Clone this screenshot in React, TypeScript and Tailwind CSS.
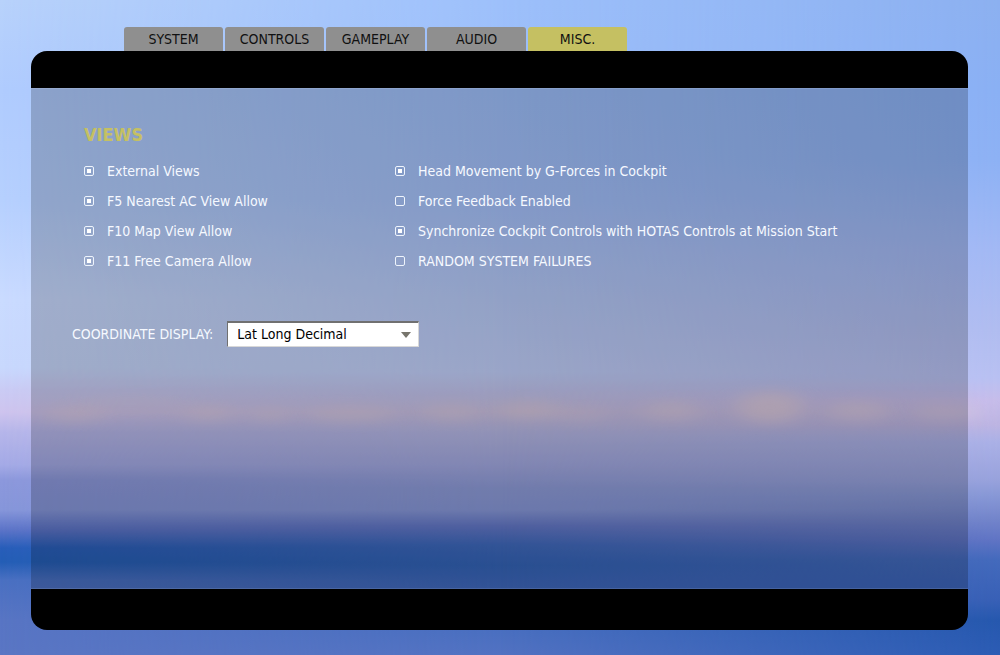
import { useState } from "react"
import clsx from "clsx"

type Stop = [number, string]

interface Option {
  id: string
  label: string
  checked: boolean
}

const tabs = ["SYSTEM", "CONTROLS", "GAMEPLAY", "AUDIO", "MISC."]

const viewOptions: Option[] = [
  { id: "external", label: "External Views", checked: true },
  { id: "f5", label: "F5 Nearest AC View Allow", checked: true },
  { id: "f10", label: "F10 Map View Allow", checked: true },
  { id: "f11", label: "F11 Free Camera Allow", checked: true },
]

const simOptions: Option[] = [
  { id: "head", label: "Head Movement by G-Forces in Cockpit", checked: true },
  { id: "ffb", label: "Force Feedback Enabled", checked: false },
  {
    id: "hotas",
    label: "Synchronize Cockpit Controls with HOTAS Controls at Mission Start",
    checked: true,
  },
  { id: "failures", label: "RANDOM SYSTEM FAILURES", checked: false },
]

// Sky colours from top to bottom, y in viewBox units
const leftSky: Stop[] = [
  [0, "#b8d2fb"], [90, "#b0ccfe"], [200, "#b6d0fe"], [300, "#cadbff"],
  [368, "#c8d8fd"], [390, "#cacbf4"], [412, "#cec4ee"], [432, "#b6b6ea"],
  [465, "#a4aae6"], [480, "#8c98dc"], [510, "#8696da"], [530, "#5c74c8"],
  [548, "#285eba"], [562, "#245eb6"], [580, "#4a70c2"], [620, "#5875c4"],
  [655, "#5a76c4"],
]
const midSky: Stop[] = [
  [0, "#9dc0fb"], [90, "#9dbef9"], [200, "#a4c0fa"], [300, "#b7caf8"],
  [372, "#c1cffa"], [392, "#c2c4ee"], [412, "#c8bfe2"], [434, "#b4b6e4"],
  [465, "#a2a8e0"], [488, "#8e9bd8"], [510, "#8898d8"], [526, "#6478c8"],
  [545, "#3f69bc"], [565, "#3463b6"], [590, "#4068bc"], [632, "#4a6fc0"],
  [655, "#5272c2"],
]
const rightSky: Stop[] = [
  [0, "#8cb0f0"], [90, "#8ab0f4"], [160, "#8db1f4"], [250, "#a2b8f4"],
  [330, "#b0bcf0"], [378, "#b8c0f2"], [400, "#c6bcea"], [425, "#bcb4e2"],
  [442, "#aab0e6"], [480, "#98a2dc"], [495, "#8898d6"], [520, "#7284ca"],
  [540, "#6074c4"], [560, "#446abc"], [600, "#3860b6"], [620, "#2658ae"],
  [655, "#2c5cb4"],
]

// x, y, rx, ry, opacity
const clouds = [
  [75, 414, 30, 8, 0.4],
  [130, 404, 60, 10, 0.15],
  [208, 413, 26, 8, 0.4],
  [270, 415, 20, 7, 0.35],
  [350, 414, 44, 8, 0.35],
  [452, 412, 28, 9, 0.35],
  [528, 410, 32, 9, 0.45],
  [580, 414, 26, 8, 0.25],
  [672, 411, 30, 10, 0.4],
  [770, 407, 34, 16, 0.6],
  [858, 411, 34, 10, 0.45],
  [945, 412, 36, 9, 0.35],
]

const SkyGradient = ({ id, stops }: { id: string; stops: Stop[] }) => (
  <linearGradient id={id} x1="0" y1="0" x2="0" y2="655" gradientUnits="userSpaceOnUse">
    {stops.map(([y, color]) => (
      <stop key={y} offset={y / 655} stopColor={color} />
    ))}
  </linearGradient>
)

const Sky = () => (
  <svg
    aria-hidden="true"
    viewBox="0 0 1000 655"
    preserveAspectRatio="none"
    className="absolute inset-0 -z-10 size-full"
  >
    <defs>
      <SkyGradient id="sky-left" stops={leftSky} />
      <SkyGradient id="sky-mid" stops={midSky} />
      <SkyGradient id="sky-right" stops={rightSky} />
      <linearGradient id="fade-mid">
        <stop offset="0" stopColor="#000" />
        <stop offset="0.5" stopColor="#fff" />
      </linearGradient>
      <linearGradient id="fade-right">
        <stop offset="0.5" stopColor="#000" />
        <stop offset="1" stopColor="#fff" />
      </linearGradient>
      <mask id="mask-mid">
        <rect width="1000" height="655" fill="url(#fade-mid)" />
      </mask>
      <mask id="mask-right">
        <rect width="1000" height="655" fill="url(#fade-right)" />
      </mask>
      <filter
        id="soft"
        x="-100%"
        y="-200%"
        width="300%"
        height="500%"
        colorInterpolationFilters="sRGB"
      >
        <feGaussianBlur stdDeviation="12 6" />
      </filter>
    </defs>
    <rect width="1000" height="655" fill="url(#sky-left)" />
    <rect width="1000" height="655" fill="url(#sky-mid)" mask="url(#mask-mid)" />
    <rect width="1000" height="655" fill="url(#sky-right)" mask="url(#mask-right)" />
    {clouds.map(([cx, cy, rx, ry, opacity]) => (
      <ellipse
        key={cx}
        cx={cx}
        cy={cy}
        rx={rx}
        ry={ry}
        fill="#e4ced8"
        opacity={opacity}
        filter="url(#soft)"
      />
    ))}
  </svg>
)

const OptionList = ({ options }: { options: Option[] }) => (
  <div className="flex flex-col gap-[10px]">
    {options.map((option) => (
      <label key={option.id} className="flex items-center gap-[13px] leading-5 whitespace-nowrap">
        <input
          type="checkbox"
          defaultChecked={option.checked}
          className="size-[10px] shrink-0 appearance-none rounded-[2px] border border-[#eef4fc] bg-clip-content p-[2px] checked:bg-white"
        />
        {option.label}
      </label>
    ))}
  </div>
)

export default function App() {
  const [active, setActive] = useState("MISC.")

  return (
    <div className="relative isolate flex min-h-screen flex-col pt-[27px] pr-8 pb-[25px] pl-[31px] font-['DejaVu_Sans_Condensed','DejaVu_Sans',sans-serif] text-[14px] text-[#f6f9ff]">
      <Sky />
      <nav className="flex gap-[2px] pl-[93px]">
        {tabs.map((tab) => (
          <button
            key={tab}
            type="button"
            onClick={() => setActive(tab)}
            className={clsx(
              "h-6 w-[99px] rounded-t-[3px] leading-6 text-[#111]",
              tab === active ? "bg-[#c5c062]" : "bg-[#8f8f8f]"
            )}
          >
            {tab}
          </button>
        ))}
      </nav>

      <main className="flex grow flex-col overflow-hidden rounded-2xl">
        <div className="h-[37px] bg-black" />
        <div className="grow border-y border-white/10 bg-black/20 pt-[34px] pl-[41px]">
          <section className="pl-3">
            <h1 className="text-[18px] leading-6 font-bold text-[#c5c062]">VIEWS</h1>
            <div className="mt-[14px] grid grid-cols-[311px_1fr]">
              <OptionList options={viewOptions} />
              <OptionList options={simOptions} />
            </div>
          </section>

          <div className="mt-[50px] flex items-center gap-[14px]">
            <label htmlFor="coordinates">COORDINATE DISPLAY:</label>
            <div className="relative">
              <select
                id="coordinates"
                className="h-[26px] w-[192px] appearance-none border border-t-2 border-[#d8d8d8] border-t-[#707070] border-l-[#707070] bg-white pl-[9px] text-black"
              >
                <option>Lat Long Decimal</option>
                <option>Lat Long</option>
                <option>MGRS</option>
              </select>
              <svg
                aria-hidden="true"
                viewBox="0 0 10 6"
                className="pointer-events-none absolute top-[11px] right-2 h-[6px] w-[10px] fill-[#77756c]"
              >
                <path d="M0 0h10L5 6z" />
              </svg>
            </div>
          </div>
        </div>
        <div className="h-[41px] bg-black" />
      </main>
    </div>
  )
}
